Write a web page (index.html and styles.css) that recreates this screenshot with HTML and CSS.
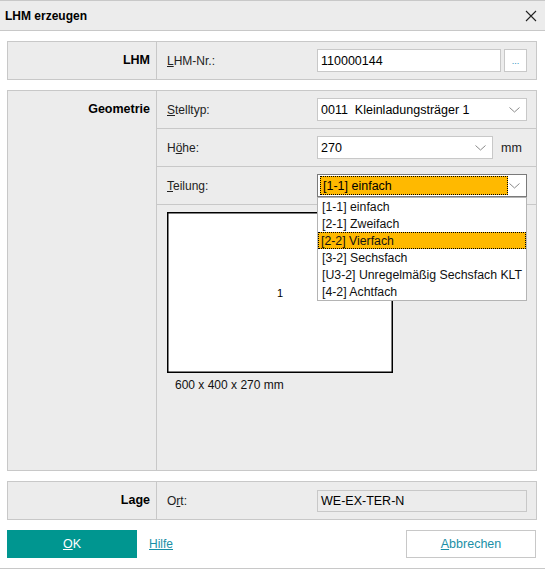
FILE: index.html
```html
<!DOCTYPE html>
<html lang="de">
<head>
<meta charset="utf-8">
<title>LHM erzeugen</title>
<link rel="stylesheet" href="styles.css">
</head>
<body>
<div class="dialog">
  <header class="titlebar">
    <span class="title">LHM erzeugen</span>
    <svg class="close" width="12" height="12" viewBox="0 0 12 12"><path d="M1 1L11 11M11 1L1 11" stroke="#222" stroke-width="1.1" fill="none"/></svg>
  </header>

  <main class="content">
    <section class="group">
      <div class="glabel">LHM</div>
      <div class="gbody">
        <div class="row">
          <span class="flabel"><u>L</u>HM-Nr.:</span>
          <div class="field">
            <div class="input grow">110000144</div>
            <div class="btn-dots">...</div>
          </div>
        </div>
      </div>
    </section>

    <section class="group">
      <div class="glabel">Geometrie</div>
      <div class="gbody">
        <div class="row sep">
          <span class="flabel"><u>S</u>telltyp:</span>
          <div class="field">
            <div class="input select grow"><span class="val">0011&nbsp;&nbsp;Kleinladungsträger 1</span>
              <svg class="chev" width="11" height="6" viewBox="0 0 11 6"><path d="M0.5 0.5L5.5 5L10.5 0.5" stroke="#8a8a8a" fill="none"/></svg></div>
          </div>
        </div>
        <div class="row sep">
          <span class="flabel">H<u>ö</u>he:</span>
          <div class="field">
            <div class="input select hoehe"><span class="val">270</span>
              <svg class="chev" width="11" height="6" viewBox="0 0 11 6"><path d="M0.5 0.5L5.5 5L10.5 0.5" stroke="#8a8a8a" fill="none"/></svg></div>
            <span class="unit">mm</span>
          </div>
        </div>
        <div class="row sep">
          <span class="flabel"><u>T</u>eilung:</span>
          <div class="field">
            <div class="dropwrap">
              <div class="input select focused"><span class="val sel">[1-1] einfach</span>
                <svg class="chev" width="11" height="6" viewBox="0 0 11 6"><path d="M0.5 0.5L5.5 5L10.5 0.5" stroke="#8a8a8a" fill="none"/></svg></div>
              <ul class="droplist">
                <li>[1-1] einfach</li>
                <li>[2-1] Zweifach</li>
                <li class="hl">[2-2] Vierfach</li>
                <li>[3-2] Sechsfach</li>
                <li>[U3-2] Unregelmäßig Sechsfach KLT</li>
                <li>[4-2] Achtfach</li>
              </ul>
            </div>
          </div>
        </div>
        <div class="canvas">
          <div class="rect"><span>1</span></div>
          <div class="dims">600 x 400 x 270 mm</div>
        </div>
      </div>
    </section>

    <section class="group">
      <div class="glabel">Lage</div>
      <div class="gbody">
        <div class="row">
          <span class="flabel">O<u>r</u>t:</span>
          <div class="field">
            <div class="input grow readonly">WE-EX-TER-N</div>
          </div>
        </div>
      </div>
    </section>
  </main>

  <footer class="footer">
    <div class="btn-ok"><u>O</u>K</div>
    <a class="help">Hilfe</a>
    <div class="spacer"></div>
    <div class="btn-cancel"><u>A</u>bbrechen</div>
  </footer>
</div>
</body>
</html>
```

FILE: styles.css
```css
* { box-sizing: border-box; }
html, body { margin: 0; padding: 0; background: #fff; }
body {
  font-family: "Liberation Sans", Arial, sans-serif;
  font-size: 12px;
  color: #111;
}
.dialog {
  width: 545px;
  height: 569px;
  border-bottom: 1px solid #c8c8c8;
  display: flex;
  flex-direction: column;
}
.titlebar {
  height: 31px;
  background: #ececec;
  border-top: 1px solid #c8c8c8;
  border-bottom: 1px solid #c8c8c8;
  display: flex;
  align-items: center;
  padding: 0 8px 0 5px;
}
.title { font-weight: bold; font-size: 12px; color: #000; flex: 1; padding-top: 1px; }
.close { display: block; }

.content {
  padding: 10px 8px 0 7px;
  display: flex;
  flex-direction: column;
  gap: 10px;
}
.group {
  display: flex;
  background: #ececec;
  border: 1px solid #c8c8c8;
}
.glabel {
  width: 149px;
  border-right: 1px solid #c8c8c8;
  text-align: right;
  font-weight: bold;
  font-size: 12.5px;
  color: #000;
  padding-right: 6px;
  line-height: 37px;
}
.gbody { flex: 1; display: flex; flex-direction: column; }
.row {
  height: 37px;
  display: flex;
  align-items: center;
  padding: 0 9px 0 10px;
}
.row.sep { height: 38px; border-bottom: 1px solid #c8c8c8; }
.flabel { width: 150px; color: #222; }
.field { flex: 1; display: flex; align-items: center; gap: 3px; }
.grow { flex: 1; }
.input {
  height: 23px;
  background: #fff;
  border: 1px solid #c8c8c8;
  padding: 0 3px;
  display: flex;
  align-items: center;
  color: #000;
  font-size: 12.5px;
}
.input.readonly { background: #ececec; height: 22px; }
.btn-dots {
  width: 23px;
  height: 23px;
  background: #fff;
  border: 1px solid #c8c8c8;
  color: #2a8fbf;
  font-size: 9px;
  display: flex;
  align-items: flex-end;
  justify-content: center;
  padding-bottom: 5px;
}
.select { justify-content: space-between; padding-right: 6px; }
.chev { display: block; }
.hoehe { width: 176px; flex: none; }
.unit { margin-left: 5px; color: #222; font-size: 12.5px; }

.dropwrap { flex: 1; position: relative; }
.focused { border-color: #7a7a7a; padding: 1px 6px 1px 2px; }
.val.sel {
  background: #ffb900;
  border: 1px dotted #000;
  height: 19px;
  width: 188px;
  padding-left: 2px;
  display: flex;
  align-items: center;
}
.droplist {
  position: absolute;
  top: 100%;
  left: 0;
  right: 0;
  margin: 0;
  padding: 0;
  list-style: none;
  background: #fff;
  border: 1px solid #b4b4b4;
  z-index: 5;
  font-size: 12.3px;
}
.droplist li {
  height: 17px;
  line-height: 16px;
  padding-left: 3px;
  border: 1px solid transparent;
  color: #111;
}
.droplist li.hl { background: #ffb900; border: 1px dotted #000; padding-left: 2px; }

.canvas {
  height: 265px;
  padding: 7px 0 0 10px;
}
.rect {
  width: 226px;
  height: 161px;
  background: #fff;
  border: 1px solid #000;
  box-shadow: inset 0 0 0 0.5px #000;
  display: flex;
  align-items: center;
  justify-content: center;
  font-size: 11px;
  color: #000;
}
.dims { margin-top: 5px; padding-left: 8px; color: #111; }

.footer {
  display: flex;
  align-items: center;
  padding: 10px 9px 0 7px;
}
.btn-ok {
  width: 130px;
  height: 28px;
  background: #009690;
  color: #fff;
  font-size: 12.5px;
  display: flex;
  align-items: center;
  justify-content: center;
}
.help {
  margin-left: 12px;
  color: #1a8fa6;
  text-decoration: underline;
}
.spacer { flex: 1; }
.btn-cancel {
  width: 130px;
  height: 28px;
  border: 1px solid #c8c8c8;
  background: #fff;
  color: #1a8fa6;
  font-size: 12.5px;
  display: flex;
  align-items: center;
  justify-content: center;
}
```
